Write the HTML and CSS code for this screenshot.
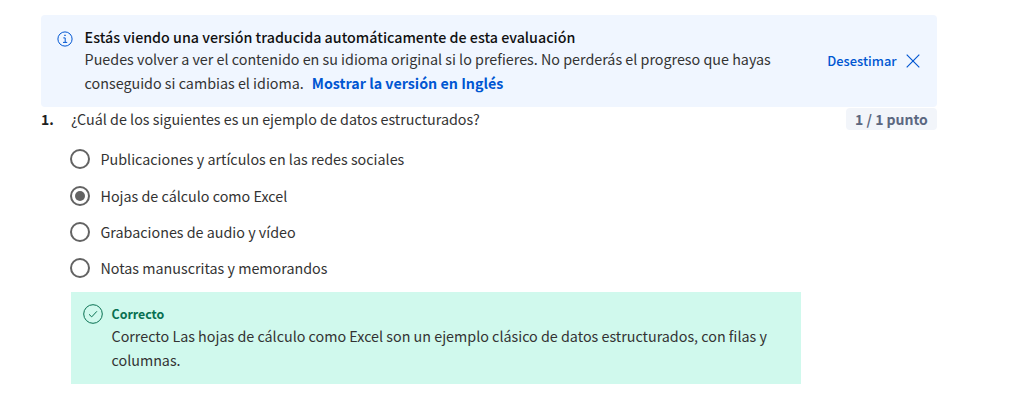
FILE: index.html
```html
<!DOCTYPE html>
<html lang="es">
<head>
<meta charset="utf-8">
<title>Evaluación</title>
<link rel="stylesheet" href="styles.css">
</head>
<body>
<main class="page">
  <section class="banner">
    <svg class="info" viewBox="0 0 16 16" fill="none" stroke="currentColor"><circle cx="8" cy="8" r="7.1"/><path d="M6.3 6.9h1.9v4.3M6 11.4h4.2"/><path d="M7.3 4.4h1.4" stroke-width="1.4"/></svg>
    <div class="banner-body">
      <div class="banner-title">Estás viendo una versión traducida automáticamente de esta evaluación</div>
      <div class="line">Puedes volver a ver el contenido en su idioma original si lo prefieres. No perderás el progreso que hayas</div>
      <div class="line">conseguido si cambias el idioma.<a class="link">Mostrar la versión en Inglés</a></div>
    </div>
    <a class="dismiss"><span>Desestimar</span><svg class="close" viewBox="0 0 14 14" fill="none" stroke="currentColor"><path d="M.7.7l12.6 12.6M13.3.7L.7 13.3" stroke-width="1.15"/></svg></a>
  </section>
  <section class="question">
    <div class="number">1.</div>
    <div class="prompt">¿Cuál de los siguientes es un ejemplo de datos estructurados?</div>
    <div class="points">1 / 1 punto</div>
  </section>
  <ul class="options">
    <li><i class="radio"></i><span>Publicaciones y artículos en las redes sociales</span></li>
    <li><i class="radio checked"></i><span>Hojas de cálculo como Excel</span></li>
    <li><i class="radio"></i><span>Grabaciones de audio y vídeo</span></li>
    <li><i class="radio"></i><span>Notas manuscritas y memorandos</span></li>
  </ul>
  <section class="feedback">
    <svg class="check" viewBox="0 0 20 20" fill="none" stroke="currentColor"><circle cx="10" cy="10" r="9.3"/><path d="M6 10.3l2.7 2.6 5.2-5.6"/></svg>
    <div>
      <div class="correct">Correcto</div>
      <div class="line">Correcto Las hojas de cálculo como Excel son un ejemplo clásico de datos estructurados, con filas y</div>
      <div class="line">columnas.</div>
    </div>
  </section>
</main>
</body>
</html>
```
FILE: styles.css
```css
* { box-sizing: border-box; }
body {
  margin: 0;
  background: #fff;
  color: #333;
  font: 400 14.32px/24px "Noto Sans CJK SC", sans-serif;
  white-space: nowrap;
}
.page { width: 896px; margin-left: 41px; padding-top: 15px; }
.banner {
  display: flex;
  height: 92px;
  padding: 11px 17px 0 16px;
  background: #f0f6ff;
  border-radius: 4px;
}
.info { width: 16px; height: 16px; margin-top: 5px; color: #0056d2; }
.banner-body { margin-left: 11.6px; }
.banner-title { height: 21px; line-height: 21px; font-size: 14.28px; font-weight: 500; color: #111; }
.line { height: 24px; }
.link { margin-left: 8px; font-size: 14.25px; font-weight: 700; color: #0056d2; }
.dismiss {
  display: flex;
  align-items: center;
  gap: 9.4px;
  height: 20px;
  margin: 25px 0 0 auto;
  font-size: 12.9px;
  font-weight: 500;
  color: #0056d2;
}
.close { width: 14px; height: 14px; }
.question { display: flex; height: 24px; }
.number { width: 30px; font-size: 14px; font-weight: 700; color: #1f1f1f; }
.points {
  width: 91px;
  height: 22px;
  margin: 1px 0 0 auto;
  border-radius: 4px;
  background: #f2f5fa;
  color: #5b6780;
  font-size: 14px;
  font-weight: 700;
  line-height: 22px;
  text-align: center;
}
.options { margin: 10px 0 0 29px; padding: 0; list-style: none; }
.options li { display: flex; align-items: center; height: 36px; gap: 10.5px; }
.options li:first-child { margin-bottom: 1px; }
.radio {
  display: grid;
  place-items: center;
  width: 20px;
  height: 20px;
  border: 2px solid #636363;
  border-radius: 50%;
}
.checked::before {
  content: "";
  width: 10px;
  height: 10px;
  border-radius: 50%;
  background: #636363;
}
.feedback {
  display: flex;
  gap: 8.5px;
  width: 730px;
  height: 92px;
  margin: 6px 0 0 30px;
  padding: 11px 12px;
  background: #d0f9ed;
}
.check { width: 20px; height: 20px; margin-top: 1px; color: #087051; }
.correct { height: 21px; line-height: 23px; font-size: 12.4px; font-weight: 700; color: #087051; }
```
